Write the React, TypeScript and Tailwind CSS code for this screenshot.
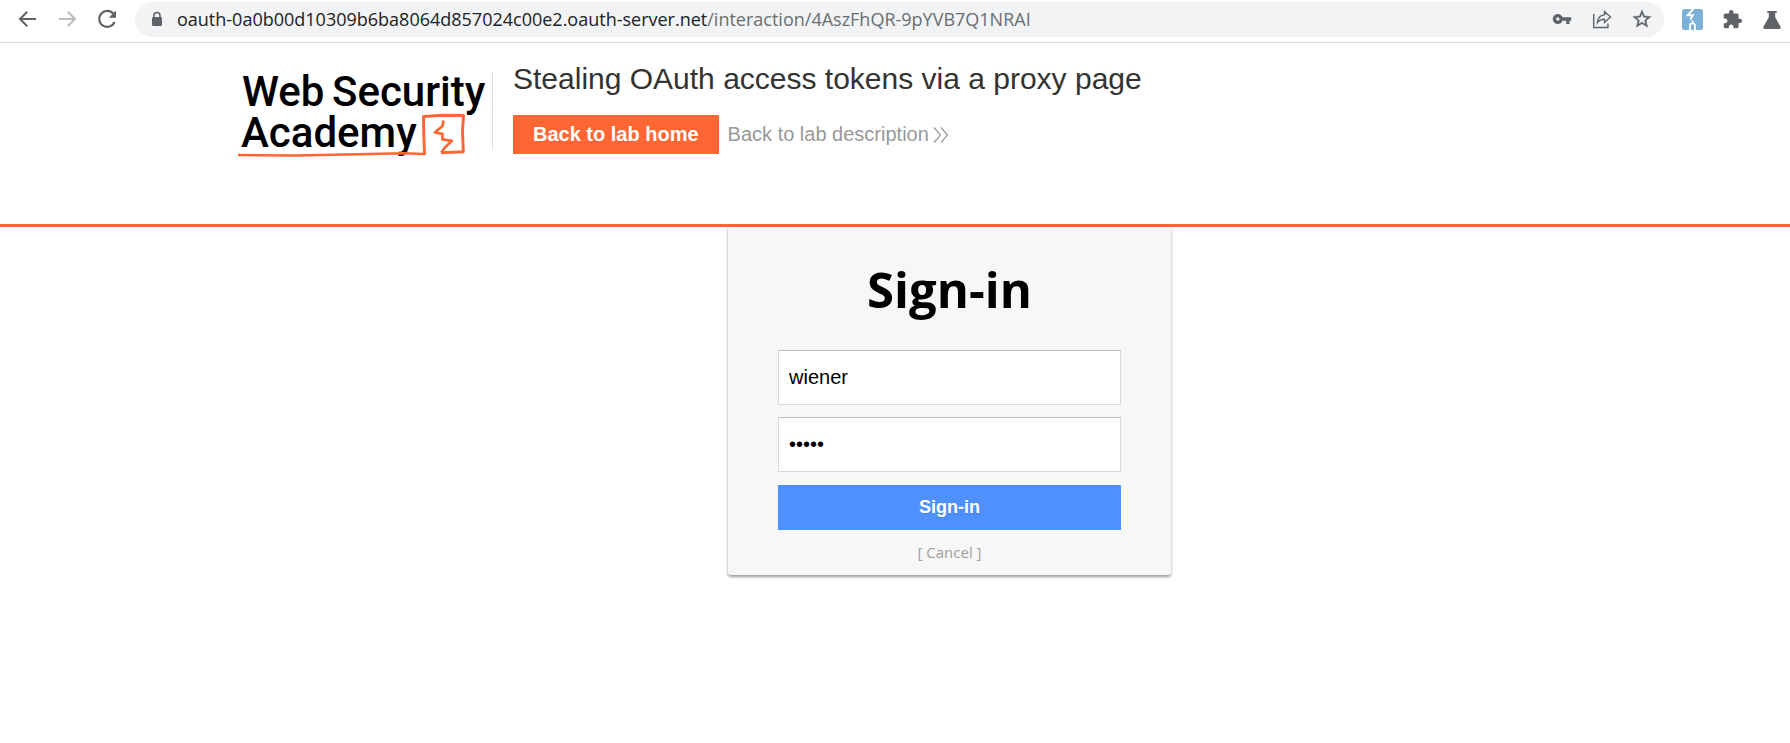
import type { ReactNode } from "react";

function IconButton({ label, children }: { label: string; children: ReactNode }) {
  return (
    <button type="button" aria-label={label} className="flex size-6 shrink-0 items-center justify-center text-[#5f6368]">
      {children}
    </button>
  );
}

function Toolbar() {
  return (
    <nav aria-label="Browser" className="flex h-[43px] items-start border-b border-[#dadce0] bg-white pt-[2px] pr-[6px] pl-[15px]">
      <div className="flex h-[34px] items-center gap-4 pr-4">
        <IconButton label="Back">
          <svg viewBox="0 0 24 24" className="size-6" fill="none" stroke="currentColor" strokeWidth="2">
            <path d="M21 12H5M12.2 4.8L5 12l7.2 7.2" />
          </svg>
        </IconButton>
        <IconButton label="Forward">
          <svg viewBox="0 0 24 24" className="size-6 text-[#babcbe]" fill="none" stroke="currentColor" strokeWidth="2">
            <path d="M4 12h16M12.8 4.8l7.2 7.2-7.2 7.2" />
          </svg>
        </IconButton>
        <IconButton label="Reload">
          <svg viewBox="0 0 24 24" className="size-6">
            <path d="M18.6 7A8 8 0 1 0 19.6 15" fill="none" stroke="currentColor" strokeWidth="2.1" />
            <path d="M21 3.5v7.3h-7.3z" fill="currentColor" />
          </svg>
        </IconButton>
      </div>
      <div className="flex h-[35px] min-w-0 flex-1 items-center rounded-full bg-[#f1f3f4] pr-[10px] pb-px pl-4">
        <svg viewBox="0 0 12 16" className="mr-[14px] h-4 w-3 shrink-0 text-[#5f6368]" aria-hidden="true">
          <path d="M3 7V4.4a3 3 0 0 1 6 0V7" fill="none" stroke="currentColor" strokeWidth="1.5" />
          <rect x="1" y="6" width="10" height="9" rx="1.3" fill="currentColor" />
        </svg>
        <div role="textbox" aria-label="Address" tabIndex={0} className="min-w-0 flex-1 truncate font-['Open_Sans',sans-serif] text-[18px] leading-[28px] text-[#202124]">
          oauth-0a0b00d10309b6ba8064d857024c00e2.oauth-server.net<span className="text-[#6b6e72]">/interaction/4AszFhQR-9pYVB7Q1NRAI</span>
        </div>
        <div className="flex items-center gap-4">
          <IconButton label="Passwords">
            <svg viewBox="0 0 24 24" className="size-5" fill="currentColor">
              <path d="M12.65 10C11.83 7.67 9.61 6 7 6c-3.31 0-6 2.69-6 6s2.69 6 6 6c2.61 0 4.83-1.67 5.65-4H17v4h4v-4h2v-4H12.65zM7 14c-1.1 0-2-.9-2-2s.9-2 2-2 2 .9 2 2-.9 2-2 2z" />
            </svg>
          </IconButton>
          <IconButton label="Share">
            <svg viewBox="0 0 24 24" className="size-6" fill="none" stroke="currentColor" strokeWidth="1.4">
              <path d="M3.7 7v13.5h14.2v-4" />
              <path d="M14.5 4.6l6 5.3-6 5.6v-3.3c-3.2 0-5.3.9-7.1 3.3.4-4.3 2.7-7.3 7.1-7.6z" />
            </svg>
          </IconButton>
          <IconButton label="Bookmark">
            <svg viewBox="0 0 24 24" className="size-[22px]" fill="currentColor" stroke="currentColor" strokeWidth="0.4">
              <path d="M22 9.24l-7.19-.62L12 2 9.19 8.63 2 9.24l5.46 4.73L5.82 21 12 17.27 18.18 21l-1.63-7.03L22 9.24zM12 15.4l-3.76 2.27 1-4.28-3.32-2.88 4.38-.38L12 6.1l1.71 4.04 4.38.38-3.32 2.88 1 4.28L12 15.4z" />
            </svg>
          </IconButton>
        </div>
      </div>
      <div className="flex h-[35px] items-center gap-4 pl-4">
        <IconButton label="Burp Suite">
          <svg viewBox="0 0 21 21" className="size-[21px]">
            <rect width="21" height="21" rx="2.5" fill="#7db1d8" />
            <path d="M11.3 0L5.8 6.2h5L8.4 10.6" fill="none" stroke="#fff" strokeWidth="2" />
            <path d="M8 21v-4.2c0-3.2 5-3.2 5 0V21M10.5 14.5v-3" fill="none" stroke="#fff" strokeWidth="1.8" />
          </svg>
        </IconButton>
        <IconButton label="Extensions">
          <svg viewBox="0 0 24 24" className="size-[21px]" fill="currentColor">
            <path d="M20.5 11H19V7c0-1.1-.9-2-2-2h-4V3.5C13 2.12 11.88 1 10.5 1S8 2.12 8 3.5V5H4c-1.1 0-1.99.9-1.99 2v3.8H3.5c1.49 0 2.7 1.21 2.7 2.7s-1.21 2.7-2.7 2.7H2V20c0 1.1.9 2 2 2h3.8v-1.5c0-1.49 1.21-2.7 2.7-2.7 1.49 0 2.7 1.21 2.7 2.7V22H17c1.1 0 2-.9 2-2v-4h1.5c1.38 0 2.5-1.12 2.5-2.5S21.88 11 20.5 11z" />
          </svg>
        </IconButton>
        <IconButton label="Labs">
          <svg viewBox="0 0 18 18" className="size-[18px]" fill="currentColor">
            <path d="M4.2 0h9.6v1.7h-1.6v4.6l5.3 9.2c.7 1.3 0 2.5-1.3 2.5H1.8C.5 18-.2 16.8.5 15.5l5.3-9.2V1.7H4.2z" />
          </svg>
        </IconButton>
      </div>
    </nav>
  );
}

function Logo() {
  return (
    <svg viewBox="0 0 252 90" className="h-[90px] w-[252px] shrink-0 overflow-visible" role="img" aria-label="Web Security Academy">
      <g className="font-[Roboto,sans-serif] text-[42px] font-medium" fill="#000">
        <text x="5" y="37">Web</text>
        <text x="95" y="37">Security</text>
        <text x="4" y="78">Academy</text>
      </g>
      <g fill="none" stroke="#ff6633" strokeLinejoin="round">
        <path d="M1 86L60 86.5L120 85.3L167 84.2L187.5 85" strokeWidth="2.5" />
        <path d="M187.6 86L186.8 66L186.5 47.5L206 46.3L226.5 46.5L225.5 62L226.3 82.8L204 83.8" strokeWidth="2.9" />
        <path d="M206.5 51.5L205.5 57L197.8 63.5L205.5 64.8L205.3 70.3L214.8 71.8L207.5 79L204.3 83.5" strokeWidth="2.7" />
      </g>
    </svg>
  );
}

function LabHeader() {
  return (
    <header className="border-b-[3px] border-[#ff6633] pl-[109px]">
      <div className="mx-auto flex h-[181px] max-w-[1425px] items-start pt-[26px]">
        <Logo />
        <div className="mt-[2px] ml-[3px] h-[78px] w-px bg-[#dddddd]" />
        <div className="-mt-2 ml-5 flex flex-col items-start gap-[18px] font-['Liberation_Sans',Arial,sans-serif]">
          <h2 className="text-[30px] leading-9 text-[#333332]">Stealing OAuth access tokens via a proxy page</h2>
          <div className="flex items-center gap-[9px]">
            <a href="#home" className="bg-[#ff6633] px-5 text-[20px] leading-[39px] font-bold text-white">Back to lab home</a>
            <a href="#description" className="flex items-center gap-1 text-[20px] leading-[39px] text-[#999999]">
              Back to lab description
              <svg viewBox="0 0 16 18" className="h-[18px] w-4" fill="none" stroke="currentColor" strokeWidth="1.2" aria-hidden="true">
                <path d="M1 1.5L7.5 9L1 16.5M8 1.5L14.5 9L8 16.5" />
              </svg>
            </a>
          </div>
        </div>
      </div>
    </header>
  );
}

const inputClass =
  "h-[55px] w-full border border-[#d9d9d9] border-t-[#c0c0c0] bg-white px-[10px] font-['Liberation_Sans',Arial,sans-serif] text-[20px] text-black outline-none";

function SignInCard() {
  return (
    <main className="pl-[109px]">
      <section className="mx-auto w-full max-w-[443px] rounded-b-[3px] bg-[#f7f7f7] px-[50px] pb-3 font-['Open_Sans',sans-serif] shadow-[0_2px_3px_rgba(0,0,0,0.4)]">
        <h1 className="pt-7 pb-[27px] text-center text-[49px] leading-[68px] font-bold text-black">Sign-in</h1>
        <form className="flex flex-col" onSubmit={(e) => e.preventDefault()}>
          <input type="text" aria-label="Username" defaultValue="wiener" className={inputClass + " mb-3"} />
          <input type="password" aria-label="Password" defaultValue="peter" className={inputClass + " mb-[13px]"} />
          <button type="submit" className="h-[45px] w-full bg-[#4d90fe] font-['Liberation_Sans',Arial,sans-serif] text-[18px] font-bold text-white [text-shadow:0_1px_rgba(0,0,0,0.1)]">
            Sign-in
          </button>
        </form>
        <p className="pt-[11px] text-center text-[15px] leading-[22px] text-[#a0a0a0]">
          <a href="#cancel">[ Cancel ]</a>
        </p>
      </section>
    </main>
  );
}

export default function App() {
  return (
    <div className="min-h-screen bg-white">
      <Toolbar />
      <LabHeader />
      <SignInCard />
    </div>
  );
}
